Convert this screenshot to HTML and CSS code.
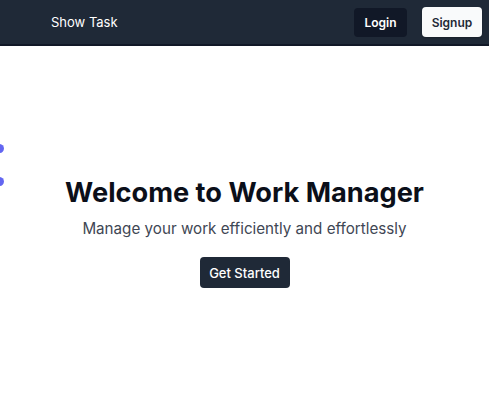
FILE: index.html
```html
<!DOCTYPE html>
<html lang="en">
<head>
<meta charset="utf-8">
<title>Work Manager</title>
<link rel="stylesheet" href="styles.css">
</head>
<body>
<nav class="nav">
  <a class="brand" href="#">Show Task</a>
  <div class="nav-actions">
    <button class="btn btn-login">Login</button>
    <button class="btn btn-signup">Signup</button>
  </div>
</nav>
<main class="hero">
  <span class="dot dot-1"></span>
  <span class="dot dot-2"></span>
  <h1 class="title">Welcome to Work Manager</h1>
  <p class="subtitle">Manage your work efficiently and effortlessly</p>
  <button class="btn btn-start">Get Started</button>
</main>
</body>
</html>
```
FILE: styles.css
```css
* { box-sizing: border-box; }
html, body { margin: 0; padding: 0; }
body {
  font-family: Inter, "Noto Sans", sans-serif;
  background: #ffffff;
  color: #111827;
  overflow: hidden;
}
.nav {
  height: 46px;
  background: #1f2937;
  border-bottom: 2px solid #111827;
  display: flex;
  align-items: center;
  justify-content: space-between;
  padding: 0 7px 0 51px;
}
.brand {
  color: #ffffff;
  text-decoration: none;
  font-size: 13px;
  font-weight: 400;
}
.nav-actions {
  display: flex;
  gap: 15px;
  align-items: center;
}
.btn {
  font-family: inherit;
  border: none;
  border-radius: 4px;
  cursor: pointer;
}
.btn-login {
  background: #111827;
  color: #ffffff;
  font-size: 12px;
  font-weight: 600;
  height: 29px;
  width: 53px;
}
.btn-signup {
  background: #f9fafb;
  color: #1f2937;
  font-size: 12px;
  font-weight: 600;
  height: 30px;
  width: 60px;
  box-shadow: 0 1px 2px rgba(0,0,0,0.25);
}
.hero {
  position: relative;
  height: 357px;
  display: flex;
  flex-direction: column;
  align-items: center;
  justify-content: center;
  padding-top: 15px;
}
.title {
  margin: 0;
  font-size: 27.2px;
  font-weight: 700;
  color: #0b0f19;
}
.subtitle {
  margin: 10px 0 19px;
  font-size: 15.2px;
  color: #3f4754;
}
.btn-start {
  background: #1f2937;
  color: #ffffff;
  font-size: 13px;
  font-weight: 500;
  width: 90px;
  height: 31px;
}
.dot {
  position: absolute;
  left: -5px;
  width: 9px;
  height: 9px;
  border-radius: 50%;
  background: #6366f1;
}
.dot-1 { top: 98px; }
.dot-2 { top: 131px; }
```
